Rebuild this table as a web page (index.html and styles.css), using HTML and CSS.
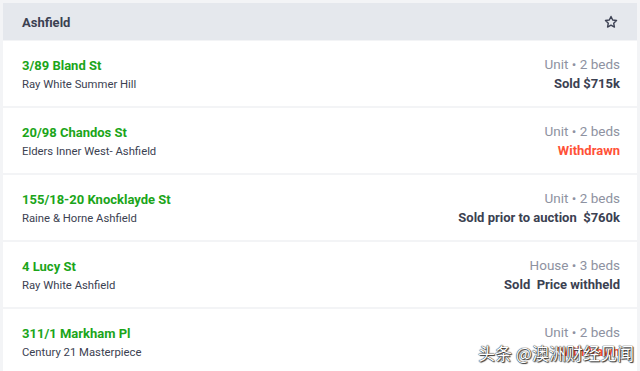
FILE: index.html
```html
<!DOCTYPE html>
<html lang="en">
<head>
<meta charset="utf-8">
<title>Ashfield</title>
<link rel="stylesheet" href="styles.css">
</head>
<body>
<div class="card">
  <div class="head">
    <span class="suburb">Ashfield</span>
    <svg class="star" width="14" height="14" viewBox="0 0 24 24" fill="none" stroke="#3d4254" stroke-width="2.4" stroke-linejoin="round"><path d="M12 2.5l2.9 6.1 6.6.8-4.9 4.6 1.3 6.6L12 17.3l-5.9 3.3 1.3-6.6-4.9-4.6 6.6-.8z"/></svg>
  </div>
  <div class="row">
    <div class="left"><div class="addr">3/89 Bland St</div><div class="agent">Ray White Summer Hill</div></div>
    <div class="right"><div class="meta">Unit • 2 beds</div><div class="status">Sold $715k</div></div>
  </div>
  <div class="row">
    <div class="left"><div class="addr">20/98 Chandos St</div><div class="agent">Elders Inner West- Ashfield</div></div>
    <div class="right"><div class="meta">Unit • 2 beds</div><div class="status red">Withdrawn</div></div>
  </div>
  <div class="row">
    <div class="left"><div class="addr">155/18-20 Knocklayde St</div><div class="agent">Raine &amp; Horne Ashfield</div></div>
    <div class="right"><div class="meta">Unit • 2 beds</div><div class="status">Sold prior to auction&nbsp; $760k</div></div>
  </div>
  <div class="row">
    <div class="left"><div class="addr">4 Lucy St</div><div class="agent">Ray White Ashfield</div></div>
    <div class="right"><div class="meta">House • 3 beds</div><div class="status">Sold&nbsp; Price withheld</div></div>
  </div>
  <div class="row">
    <div class="left"><div class="addr">311/1 Markham Pl</div><div class="agent">Century 21 Masterpiece</div></div>
    <div class="right"><div class="meta">Unit • 2 beds</div><div class="status red">Withdrawn</div></div>
  </div>
</div>
<div class="watermark">头条 @澳洲财经见闻</div>
</body>
</html>
```
FILE: styles.css
```css
html, body { margin: 0; padding: 0; }
body {
  background: #f3f4f6;
  font-family: Roboto, "Noto Sans", sans-serif;
  color: #3b4151;
  padding: 3px 3px 0 3px;
  height: 368px;
  overflow: hidden;
  position: relative;
}
.card { display: flex; flex-direction: column; gap: 2px; }
.head {
  height: 37px;
  background: #e5e8ed;
  display: flex;
  align-items: center;
  justify-content: space-between;
  padding: 1px 19px 0 19px;
  box-sizing: border-box;
  margin-bottom: -1px;
}
.suburb { font-weight: 700; font-size: 13px; }
.star { display: block; }
.row {
  background: #fff;
  height: 65px;
  display: flex;
  justify-content: space-between;
  align-items: center;
  padding: 0 17px 0 19px;
}
.left, .right { display: flex; flex-direction: column; gap: 2px; }
.left { padding-top: 2px; }
.right { align-items: flex-end; }
.addr { color: #1ba51a; font-weight: 700; font-size: 13px; line-height: 18px; }
.agent { font-size: 11.3px; line-height: 16px; }
.meta { color: #8e92a1; font-size: 13.5px; line-height: 18px; }
.status { font-weight: 700; font-size: 13px; line-height: 17px; }
.status.red { color: #ff5137; }
.watermark {
  position: absolute;
  left: 478px;
  top: 340px;
  font-family: "Noto Sans CJK SC", sans-serif;
  font-size: 17px;
  color: #fff;
  text-shadow: 0 0 1px #222, 0 0 1px #222, 1px 1px 1px #333;
  white-space: nowrap;
}
```
